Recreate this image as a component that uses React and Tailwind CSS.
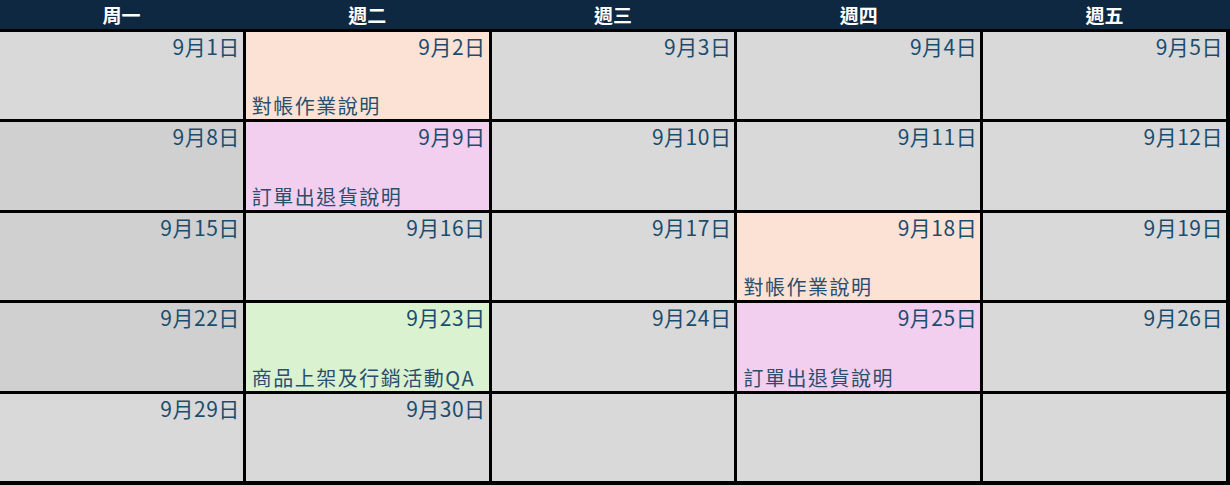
import React from "react";

const days = ["周一", "週二", "週三", "週四", "週五"];

// 每週一列，null 表示空白格
const weeks = [
  [1, 2, 3, 4, 5],
  [8, 9, 10, 11, 12],
  [15, 16, 17, 18, 19],
  [22, 23, 24, 25, 26],
  [29, 30, null, null, null],
];

const events = {
  2: { text: "對帳作業說明", bg: "bg-[#fbe2d5]" },
  9: { text: "訂單出退貨說明", bg: "bg-[#f2ceef]" },
  18: { text: "對帳作業說明", bg: "bg-[#fbe2d5]" },
  23: { text: "商品上架及行銷活動QA", bg: "bg-[#daf2d0]" },
  25: { text: "訂單出退貨說明", bg: "bg-[#f2ceef]" },
};

function DayCell({ day, darker }) {
  const ev = day ? events[day] : null;
  const bg = ev ? ev.bg : darker ? "bg-[#d0d0d0]" : "bg-[#d9d9d9]";
  return (
    <div className={`${bg} flex flex-col justify-between min-h-0 overflow-hidden`}>
      <div className="text-right pr-[3px] pt-[2px] text-[21px] leading-[25px] tracking-[0.5px] text-[#1b4d6e]">
        {day ? `9月${day}日` : ""}
      </div>
      {ev && (
        <div className="pl-[6px] pb-0 text-[20px] leading-[26px] tracking-[1.5px] text-[#2a4f6e] whitespace-nowrap">
          {ev.text}
        </div>
      )}
    </div>
  );
}

export default function App() {
  return (
    <div
      className="w-[1230px] h-[485px] bg-black flex flex-col"
      style={{ fontFamily: '"Noto Sans CJK TC", "Noto Sans", sans-serif' }}
    >
      {/* 表頭 */}
      <div className="h-[29px] bg-[#0e2841] grid grid-cols-5 gap-[3px] pr-[4px]">
        {days.map((d) => (
          <div
            key={d}
            className="flex items-center justify-center text-white font-bold text-[19px] leading-none"
          >
            {d}
          </div>
        ))}
      </div>

      {/* 日期格 */}
      <div className="flex-1 grid grid-cols-5 grid-rows-5 gap-[3px] pt-[3px] pr-[4px] pb-[4px]">
        {weeks.map((week, wi) =>
          week.map((day, di) => (
            <DayCell
              key={`${wi}-${di}`}
              day={day}
              darker={di === 0 && wi >= 1 && wi <= 3}
            />
          ))
        )}
      </div>
    </div>
  );
}
